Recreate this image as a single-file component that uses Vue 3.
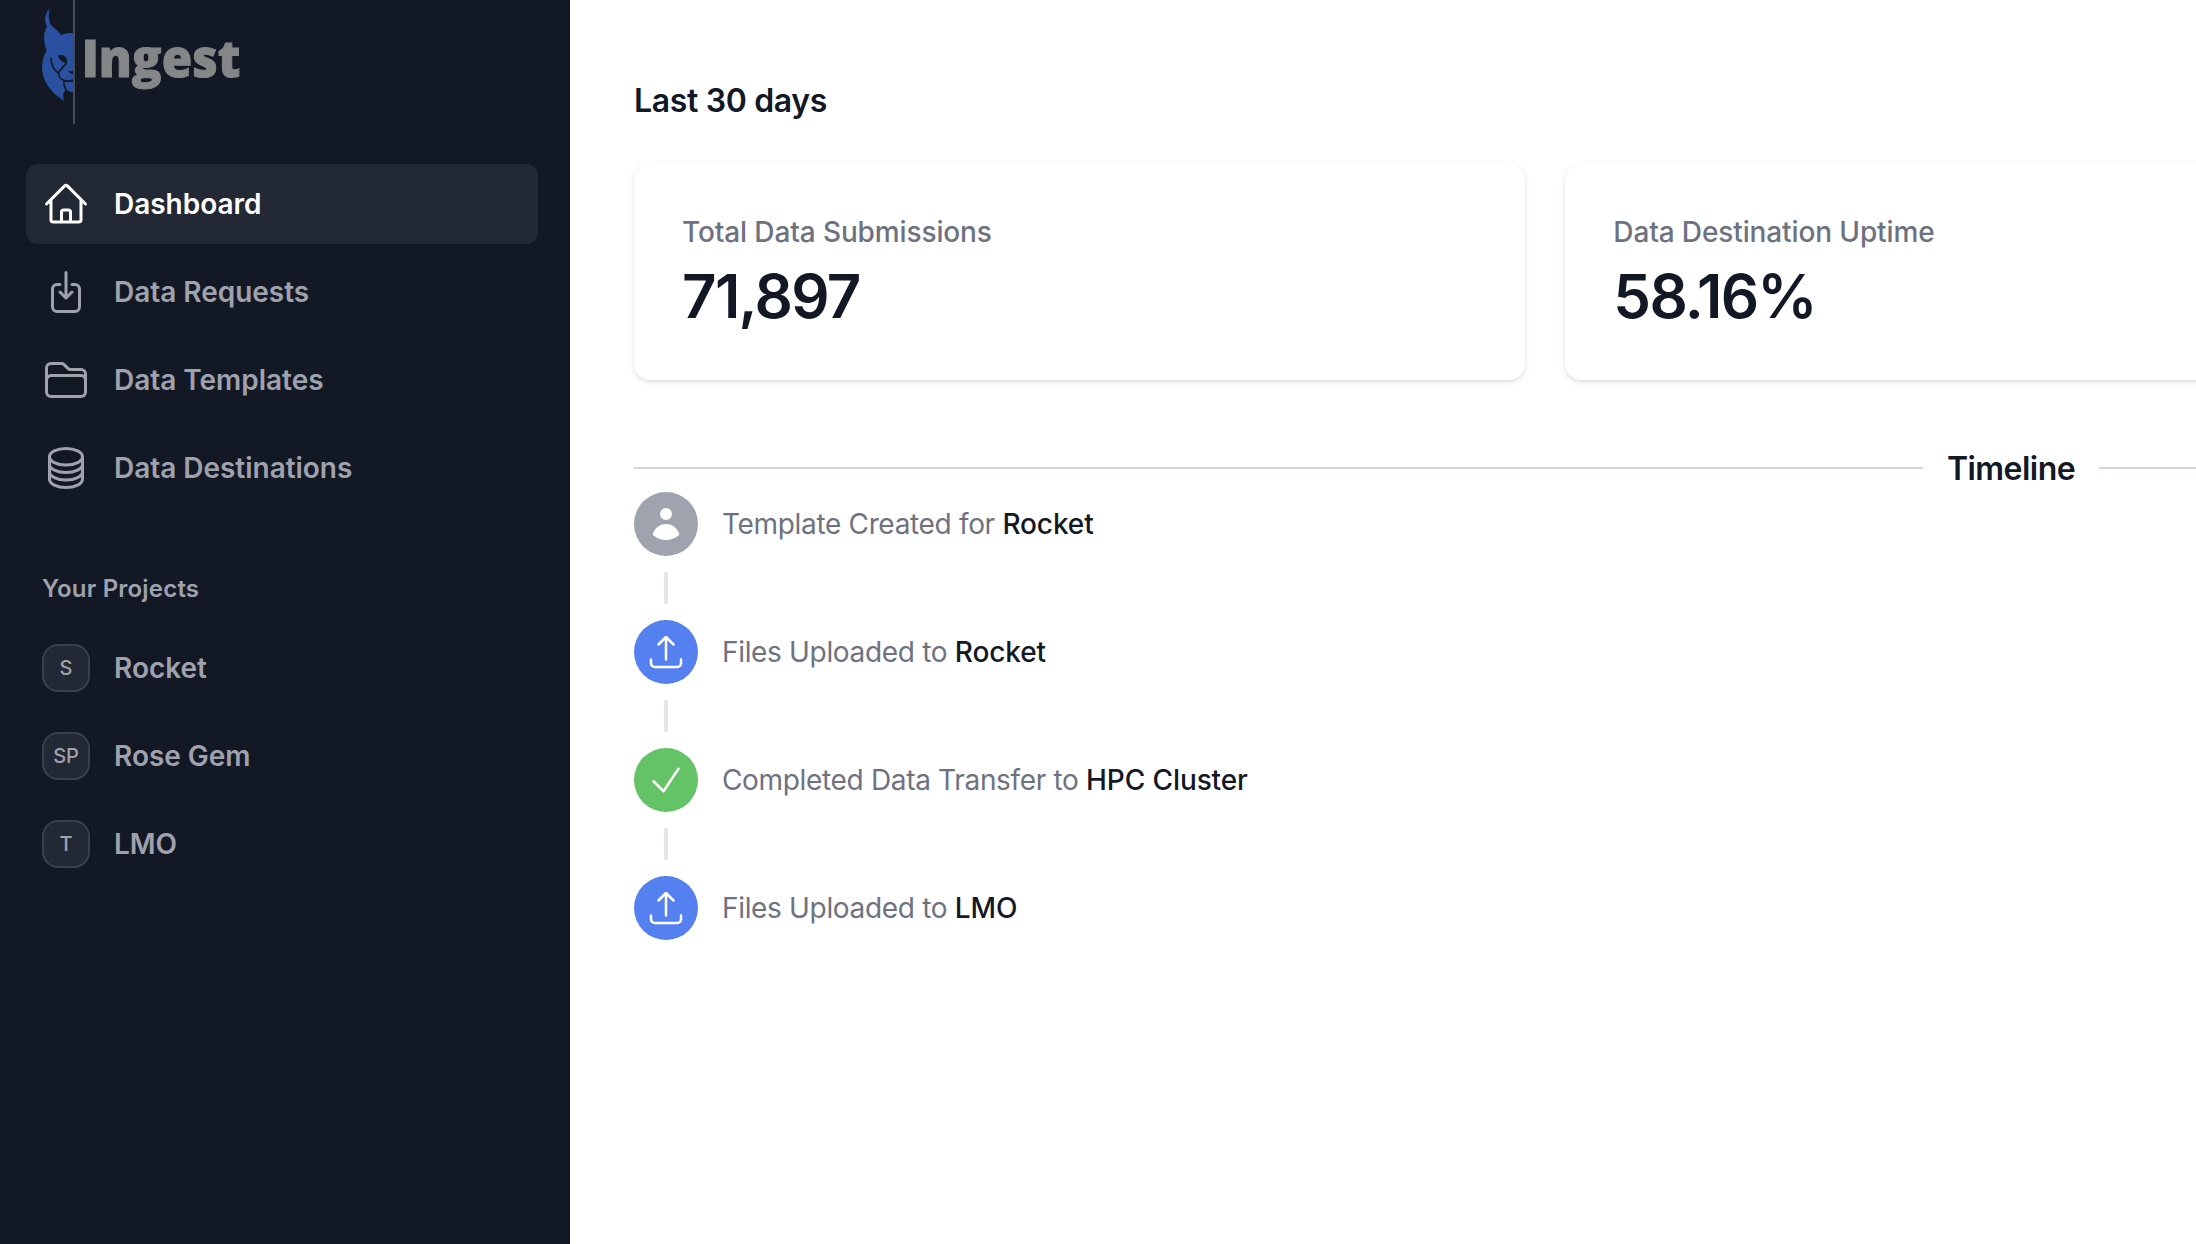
<script setup>
const nav = [
  {
    name: 'Dashboard',
    active: true,
    path: 'M2.25 12l8.954-8.955c.44-.439 1.152-.439 1.591 0L21.75 12M4.5 9.75v10.125c0 .621.504 1.125 1.125 1.125H9.75v-4.875c0-.621.504-1.125 1.125-1.125h2.25c.621 0 1.125.504 1.125 1.125V21h4.125c.621 0 1.125-.504 1.125-1.125V9.75M8.25 21h8.25',
  },
  {
    name: 'Data Requests',
    path: 'M9 8.25H7.5a2.25 2.25 0 00-2.25 2.25v9a2.25 2.25 0 002.25 2.25h9a2.25 2.25 0 002.25-2.25v-9a2.25 2.25 0 00-2.25-2.25H15M9 12l3 3m0 0l3-3m-3 3V2.25',
  },
  {
    name: 'Data Templates',
    path: 'M2.25 12.75V12A2.25 2.25 0 014.5 9.75h15A2.25 2.25 0 0121.75 12v.75m-8.69-6.44l-2.12-2.12a1.5 1.5 0 00-1.061-.44H4.5A2.25 2.25 0 002.25 6v12a2.25 2.25 0 002.25 2.25h15A2.25 2.25 0 0021.75 18V9a2.25 2.25 0 00-2.25-2.25h-5.379a1.5 1.5 0 01-1.06-.44z',
  },
  {
    name: 'Data Destinations',
    path: 'M20.25 6.375c0 2.278-3.694 4.125-8.25 4.125S3.75 8.653 3.75 6.375m16.5 0c0-2.278-3.694-4.125-8.25-4.125S3.75 4.097 3.75 6.375m16.5 0v11.25c0 2.278-3.694 4.125-8.25 4.125s-8.25-1.847-8.25-4.125V6.375m16.5 0v3.75m-16.5-3.75v3.75m16.5 0v3.75C20.25 16.153 16.556 18 12 18s-8.25-1.847-8.25-4.125v-3.75m16.5 0c0 2.278-3.694 4.125-8.25 4.125s-8.25-1.847-8.25-4.125',
  },
]

const projects = [
  { initial: 'S', name: 'Rocket' },
  { initial: 'SP', name: 'Rose Gem' },
  { initial: 'T', name: 'LMO' },
]

const stats = [
  { label: 'Total Data Submissions', value: '71,897' },
  { label: 'Data Destination Uptime', value: '58.16%' },
]

const upload =
  'M3 16.5v2.25A2.25 2.25 0 005.25 21h13.5A2.25 2.25 0 0021 18.75V16.5m-13.5-9L12 3m0 0l4.5 4.5M12 3v13.5'
const events = [
  { text: 'Template Created for', target: 'Rocket', kind: 'user' },
  { text: 'Files Uploaded to', target: 'Rocket', kind: 'upload', path: upload },
  { text: 'Completed Data Transfer to', target: 'HPC Cluster', kind: 'done', path: 'M4.5 12.75l6 6 9-13.5' },
  { text: 'Files Uploaded to', target: 'LMO', kind: 'upload', path: upload },
]
</script>

<template>
  <div class="app">
    <aside class="sidebar">
      <svg class="logo" viewBox="126 0 660 372" width="220" height="124">
        <path
          fill="#2a519f"
          d="M150 24C143 42 147 64 153 76C160 84 177 92 182 106C194 99 208 99 220 99V277C210 276 203 272 198 269C188 276 188 288 192 302C164 286 138 258 130 228C123 202 126 172 140 153C131 128 128 98 141 80C130 58 136 38 150 24Z"
        />
        <path
          fill="#131825"
          d="M174 166C186 162 200 168 202 181C202 189 197 190 191 187C183 184 175 176 174 166ZM202 212Q210 216 222 212V222Q213 223 209 218Z"
        />
        <g fill="none" stroke="#131825" stroke-width="5">
          <path d="M200 186C196 200 178 206 176 219" />
          <path d="M153 174C154 200 162 211 175 219C178 240 194 247 222 242" />
          <path d="M192 244C189 256 196 262 199 272" />
          <path d="M206 244Q214 240 222 234" stroke-width="3" />
        </g>
        <rect x="219" y="0" width="6" height="372" fill="#474b56" />
        <text x="245" y="230" class="wordmark" textLength="476" lengthAdjust="spacingAndGlyphs">Ingest</text>
      </svg>

      <nav class="nav">
        <a v-for="item in nav" :key="item.name" class="item" :class="{ active: item.active }">
          <svg class="nav-icon" viewBox="0 0 24 24"><path :d="item.path" /></svg>
          <span>{{ item.name }}</span>
        </a>
      </nav>

      <h3 class="projects-title">Your Projects</h3>
      <nav class="projects">
        <a v-for="p in projects" :key="p.name" class="item">
          <span class="badge">{{ p.initial }}</span>
          <span>{{ p.name }}</span>
        </a>
      </nav>
    </aside>

    <main class="main">
      <h2 class="heading">Last 30 days</h2>
      <dl class="stats">
        <div v-for="s in stats" :key="s.label" class="card">
          <dt>{{ s.label }}</dt>
          <dd>{{ s.value }}</dd>
        </div>
      </dl>

      <div class="divider"><h2>Timeline</h2></div>

      <ul class="feed">
        <li v-for="(e, i) in events" :key="i">
          <span class="dot" :class="e.kind">
            <svg v-if="e.kind === 'user'" viewBox="0 0 20 20" fill="#fff">
              <path
                d="M10 8a3 3 0 100-6 3 3 0 000 6zM3.465 14.493a1.23 1.23 0 00.41 1.412A9.957 9.957 0 0010 18c2.31 0 4.438-.784 6.131-2.1.43-.333.604-.903.408-1.41a7.002 7.002 0 00-13.074.003z"
              />
            </svg>
            <svg v-else viewBox="0 0 24 24" class="line-icon"><path :d="e.path" /></svg>
          </span>
          <p>{{ e.text }} <strong>{{ e.target }}</strong></p>
        </li>
      </ul>
    </main>
  </div>
</template>

<style>
html,
body {
  margin: 0;
  overflow: hidden;
}
</style>

<style scoped>
.app {
  display: flex;
  width: 2196px;
  height: 1244px;
  overflow: hidden;
  background: #fff;
  font-family: Inter, 'Liberation Sans', sans-serif;
  font-size: 28px;
  line-height: 40px;
  color: #131825;
}
h2,
h3,
dl,
dd,
p,
ul {
  margin: 0;
  padding: 0;
}
.sidebar {
  flex: none;
  box-sizing: border-box;
  width: 570px;
  height: 100%;
  padding: 0 32px 0 26px;
  background: #131825;
  color: #9fa2ad;
}
.logo {
  display: block;
  margin-left: 16px;
}
.wordmark {
  font-family: 'Open Sans', 'Noto Sans', sans-serif;
  font-size: 152px;
  font-weight: 800;
  fill: #858688;
  stroke: #858688;
  stroke-width: 3px;
}
.nav,
.projects {
  display: flex;
  flex-direction: column;
  gap: 8px;
}
.nav {
  margin-top: 40px;
}
.item {
  display: flex;
  align-items: center;
  gap: 24px;
  padding: 16px;
  height: 48px;
  border-radius: 12px;
  font-weight: 600;
  letter-spacing: -0.03px;
}
.item.active {
  background: #232835;
  color: #fff;
}
.nav-icon {
  width: 48px;
  height: 48px;
}
.nav-icon path,
.line-icon path {
  fill: none;
  stroke: currentColor;
  stroke-width: 1.5;
  stroke-linecap: round;
  stroke-linejoin: round;
}
.projects-title {
  margin: 57px 0 15px 16px;
  font-size: 24px;
  line-height: 48px;
  font-weight: 600;
  letter-spacing: 0.2px;
}
.badge {
  box-sizing: border-box;
  display: flex;
  align-items: center;
  justify-content: center;
  width: 48px;
  height: 48px;
  border: 2px solid #3a3f4b;
  border-radius: 16px;
  background: #232835;
  font-size: 20px;
  font-weight: 500;
}
.main {
  flex: none;
  width: 2754px;
  padding: 77px 64px 0;
}
.heading,
.divider h2 {
  font-size: 32px;
  line-height: 48px;
  font-weight: 600;
  letter-spacing: -0.35px;
}
.stats {
  display: grid;
  grid-template-columns: repeat(3, 1fr);
  gap: 40px;
  margin-top: 39px;
}
.card {
  box-sizing: border-box;
  height: 216px;
  padding: 48px;
  border-radius: 16px;
  background: #fff;
  box-shadow: 0 2px 6px rgba(0, 0, 0, 0.1), 0 2px 4px -2px rgba(0, 0, 0, 0.1);
}
.card dt {
  font-weight: 500;
  color: #6e7280;
  letter-spacing: -0.12px;
}
.card dd {
  margin-top: 8px;
  font-size: 60px;
  line-height: 72px;
  font-weight: 600;
  letter-spacing: -0.028em;
}
.divider {
  display: flex;
  align-items: center;
  gap: 24px;
  margin-top: 64px;
}
.divider h2 {
  box-sizing: border-box;
  height: 48px;
  padding-top: 2px;
  line-height: 46px;
  letter-spacing: -0.55px;
}
.divider::before,
.divider::after {
  content: '';
  flex: 1;
  height: 2px;
  background: #d2d5db;
}
.feed {
  list-style: none;
}
.feed li {
  position: relative;
  display: flex;
  align-items: center;
  gap: 24px;
  height: 64px;
  margin-bottom: 64px;
}
.feed li:not(:last-child)::after {
  content: '';
  position: absolute;
  left: 30px;
  top: 80px;
  width: 4px;
  height: 32px;
  background: #e6e7eb;
}
.dot {
  display: flex;
  align-items: center;
  justify-content: center;
  width: 64px;
  height: 64px;
  border-radius: 50%;
  color: #fff;
}
.dot svg {
  width: 40px;
  height: 40px;
}
.dot.user {
  background: #9fa3ae;
}
.dot.upload {
  background: #5580f0;
}
.dot.done {
  background: #64c366;
}
.feed p {
  color: #6e7280;
  letter-spacing: -0.33px;
}
.feed strong {
  font-weight: 500;
  color: #131825;
  letter-spacing: -0.1px;
}
</style>
